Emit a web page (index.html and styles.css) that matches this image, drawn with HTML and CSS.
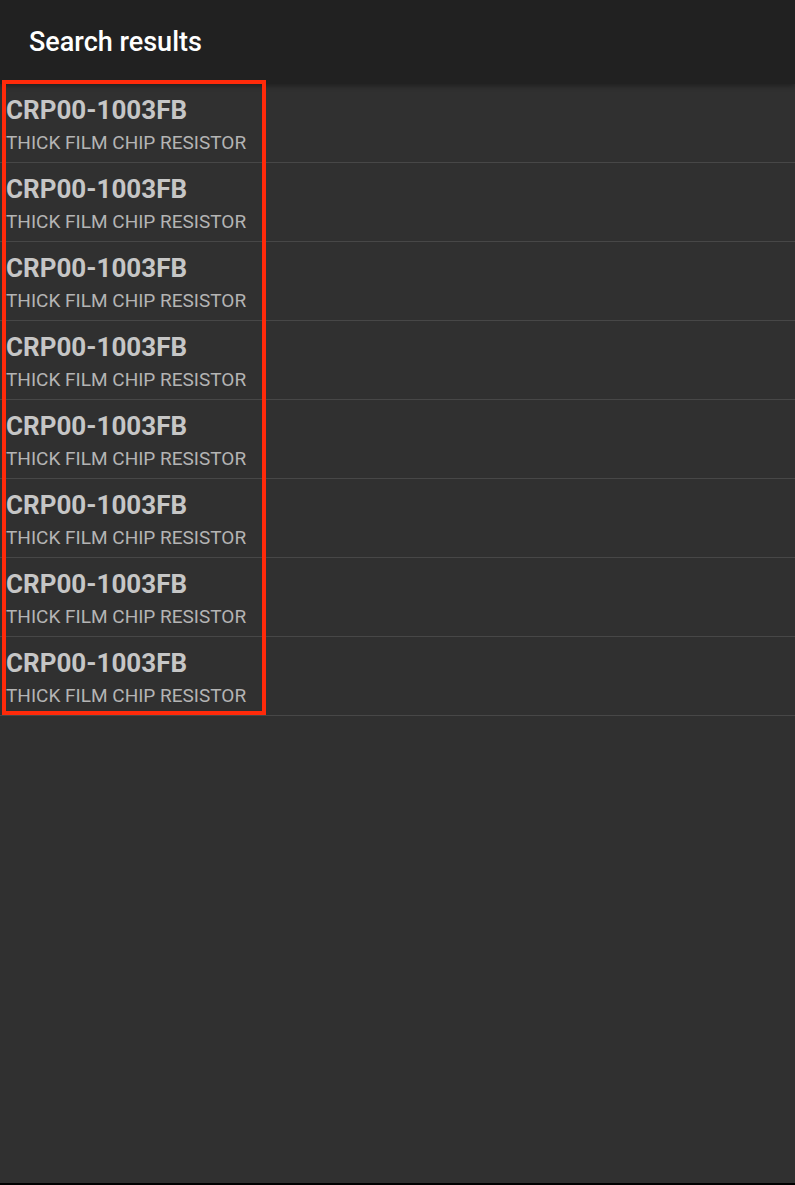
FILE: index.html
```html
<!DOCTYPE html>
<html lang="en">
<head>
  <meta charset="UTF-8">
  <meta name="viewport" content="width=device-width, initial-scale=1.0">
  <title>Search results</title>
  <link rel="stylesheet" href="styles.css">
</head>
<body>
  <div class="screen">
    <header class="toolbar">
      <h1 class="toolbar-title">Search results</h1>
    </header>

    <main class="results">
      <ul class="result-list">
        <li class="result-item">
          <div class="part-number">CRP00-1003FB</div>
          <div class="part-desc">THICK FILM CHIP RESISTOR</div>
        </li>
        <li class="result-item">
          <div class="part-number">CRP00-1003FB</div>
          <div class="part-desc">THICK FILM CHIP RESISTOR</div>
        </li>
        <li class="result-item">
          <div class="part-number">CRP00-1003FB</div>
          <div class="part-desc">THICK FILM CHIP RESISTOR</div>
        </li>
        <li class="result-item">
          <div class="part-number">CRP00-1003FB</div>
          <div class="part-desc">THICK FILM CHIP RESISTOR</div>
        </li>
        <li class="result-item">
          <div class="part-number">CRP00-1003FB</div>
          <div class="part-desc">THICK FILM CHIP RESISTOR</div>
        </li>
        <li class="result-item">
          <div class="part-number">CRP00-1003FB</div>
          <div class="part-desc">THICK FILM CHIP RESISTOR</div>
        </li>
        <li class="result-item">
          <div class="part-number">CRP00-1003FB</div>
          <div class="part-desc">THICK FILM CHIP RESISTOR</div>
        </li>
        <li class="result-item">
          <div class="part-number">CRP00-1003FB</div>
          <div class="part-desc">THICK FILM CHIP RESISTOR</div>
        </li>
      </ul>

      <!-- highlight drawn over the text column -->
      <div class="highlight"></div>
    </main>
  </div>
</body>
</html>
```

FILE: styles.css
```css
body, html {
  margin: 0;
  padding: 0;
  height: 100%;
  width: 100%;
  font-family: Roboto, "Noto Sans", sans-serif;
  background-color: #000;
}

.screen {
  height: 1183px;
  display: flex;
  flex-direction: column;
  background-color: #303030;
}

.toolbar {
  height: 84px;
  flex-shrink: 0;
  display: flex;
  align-items: center;
  padding-left: 29px;
  background-color: #212121;
  box-shadow: 0 2px 5px rgba(0,0,0,0.35);
  position: relative;
  z-index: 1;
}

.toolbar-title {
  margin: 0;
  color: #ffffff;
  font-size: 27px;
  font-weight: 500;
  line-height: 32px;
}

.results {
  position: relative;
  flex: 1;
}

.result-list {
  list-style: none;
  margin: 0;
  padding: 0;
}

.result-item {
  height: 78px;
  box-sizing: content-box;
  padding: 0 6px;
  border-bottom: 1px solid #474747;
  display: flex;
  flex-direction: column;
}

.part-number {
  margin-top: 11px;
  color: #c6c6c6;
  font-size: 26px;
  font-weight: 700;
  line-height: 30px;
}

.part-desc {
  margin-top: 6px;
  color: #b4b4b4;
  font-size: 19px;
  line-height: 24px;
}

.highlight {
  position: absolute;
  z-index: 2;
  left: 2px;
  top: -4px;
  width: 256px;
  height: 627px;
  border: 4px solid #ff2a0a;
}
```
